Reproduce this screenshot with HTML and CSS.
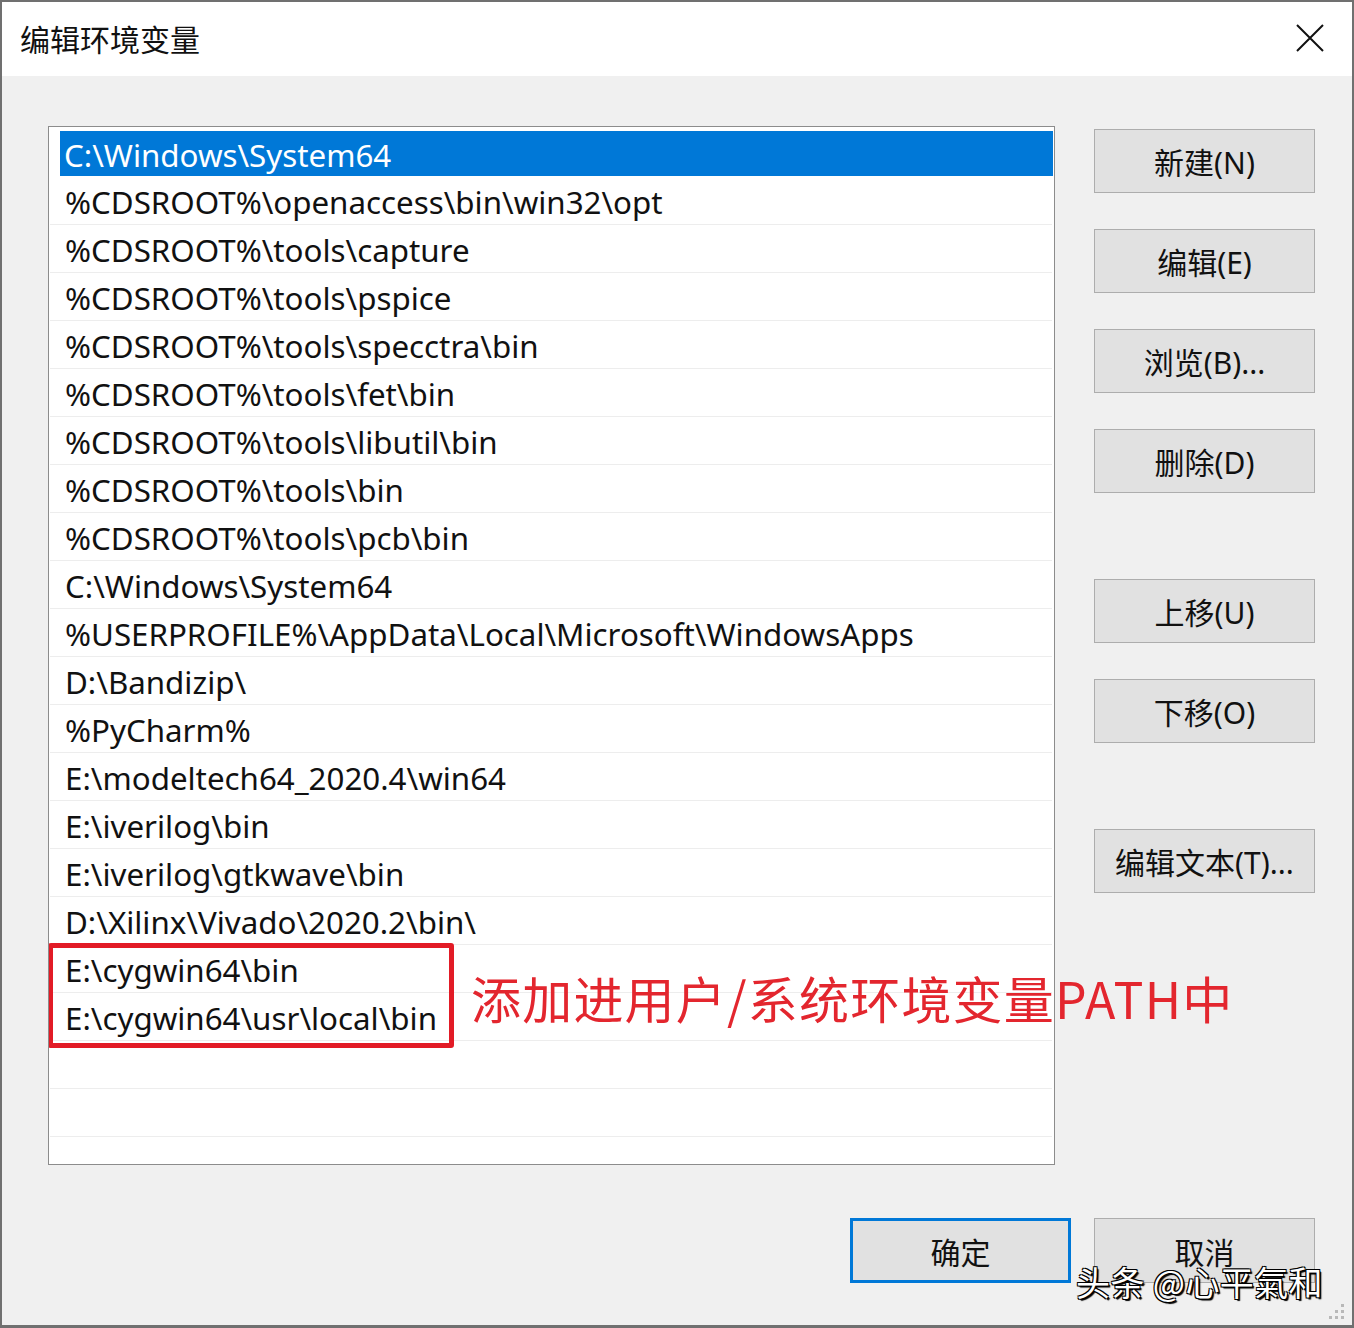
FILE: index.html
```html
<!DOCTYPE html>
<html lang="zh-CN">
<head>
<meta charset="utf-8">
<title>编辑环境变量</title>
<link rel="stylesheet" href="styles.css">
</head>
<body>
<div class="window">
  <div class="titlebar">
    <span class="title">编辑环境变量</span>
    <span class="close">
      <svg width="28" height="28" viewBox="0 0 28 28"><path d="M1 1 L27 27 M27 1 L1 27" stroke="#111" stroke-width="2" fill="none"/></svg>
    </span>
  </div>
  <div class="content">
    <div class="main">
      <div class="listbox">
        <div class="row selected"><span class="sel">C:\Windows\System64</span></div>
        <div class="row">%CDSROOT%\openaccess\bin\win32\opt</div>
        <div class="row">%CDSROOT%\tools\capture</div>
        <div class="row">%CDSROOT%\tools\pspice</div>
        <div class="row">%CDSROOT%\tools\specctra\bin</div>
        <div class="row">%CDSROOT%\tools\fet\bin</div>
        <div class="row">%CDSROOT%\tools\libutil\bin</div>
        <div class="row">%CDSROOT%\tools\bin</div>
        <div class="row">%CDSROOT%\tools\pcb\bin</div>
        <div class="row">C:\Windows\System64</div>
        <div class="row">%USERPROFILE%\AppData\Local\Microsoft\WindowsApps</div>
        <div class="row">D:\Bandizip\</div>
        <div class="row">%PyCharm%</div>
        <div class="row">E:\modeltech64_2020.4\win64</div>
        <div class="row">E:\iverilog\bin</div>
        <div class="row">E:\iverilog\gtkwave\bin</div>
        <div class="row">D:\Xilinx\Vivado\2020.2\bin\</div>
        <div class="row">E:\cygwin64\bin</div>
        <div class="row">E:\cygwin64\usr\local\bin</div>
        <div class="row"></div>
        <div class="row"></div>
        <div class="redbox"></div>
      </div>
      <div class="note">添加进用户/系统环境变量PATH中</div>
      <div class="buttons">
        <div class="btn">新建(N)</div>
        <div class="btn gap-s">编辑(E)</div>
        <div class="btn gap-s">浏览(B)...</div>
        <div class="btn gap-s">删除(D)</div>
        <div class="btn gap-l">上移(U)</div>
        <div class="btn gap-s">下移(O)</div>
        <div class="btn gap-l">编辑文本(T)...</div>
      </div>
    </div>
    <div class="footer">
      <div class="btn default">确定</div>
      <div class="btn">取消</div>
    </div>
    <div class="watermark">头条 @心平氣和</div>
    <div class="grip">
      <svg width="20" height="20" viewBox="0 0 20 20" fill="#b8b8b8">
        <rect x="15" y="3" width="3" height="3"/>
        <rect x="9" y="9" width="3" height="3"/><rect x="15" y="9" width="3" height="3"/>
        <rect x="3" y="15" width="3" height="3"/><rect x="9" y="15" width="3" height="3"/><rect x="15" y="15" width="3" height="3"/>
      </svg>
    </div>
  </div>
</div>
</body>
</html>
```
FILE: styles.css
```css
* { box-sizing: border-box; }
html, body { margin: 0; padding: 0; }
body {
  width: 1354px;
  height: 1328px;
  background: #f0f0f0;
  font-family: "Noto Sans", "Noto Sans CJK SC", sans-serif;
  color: #000;
}
.window {
  width: 1354px;
  height: 1328px;
  border: 2px solid #707070;
  border-bottom-width: 3px;
  background: #f0f0f0;
  display: flex;
  flex-direction: column;
}
.titlebar {
  height: 74px;
  background: #fff;
  display: flex;
  align-items: center;
  justify-content: space-between;
  padding: 0 28px 0 18px;
}
.title {
  font-family: "Noto Sans CJK SC", sans-serif;
  font-size: 30px;
  color: #111;
  margin-top: -3px;
}
.close { display: flex; margin-top: -2px; }
.content {
  position: relative;
  flex: 1;
  padding: 50px 37px 0 46px;
}
.main {
  position: relative;
  display: flex;
  align-items: flex-start;
}
.listbox {
  position: relative;
  width: 1007px;
  height: 1039px;
  background: #fff;
  border: 1px solid #8c8c8c;
  padding: 2px 2px 0 1px;
  overflow: hidden;
}
.row {
  height: 48px;
  border-bottom: 1px solid #ededed;
  font-size: 31.3px;
  line-height: 50px;
  padding-left: 15px;
  white-space: nowrap;
  color: #111;
}
.row.selected { padding-left: 10px; padding-top: 2px; border-bottom-color: #fff; line-height: 45px; }
.sel {
  display: block;
  width: 993px;
  height: 45px;
  line-height: 48px;
  background: #0078d7;
  color: #fff;
  padding-left: 4px;
  overflow: hidden;
}
.redbox {
  position: absolute;
  left: -1px;
  top: 816px;
  width: 406px;
  height: 105px;
  border: 5px solid #e21b26;
  border-radius: 3px;
}
.note {
  position: absolute;
  left: 423px;
  top: 836px;
  font-family: "Noto Sans CJK SC", sans-serif;
  font-size: 50px;
  line-height: 70px;
  letter-spacing: 1.2px;
  color: #e3262e;
  white-space: nowrap;
}
.buttons {
  margin-left: 39px;
  margin-top: 3px;
  display: flex;
  flex-direction: column;
}
.btn {
  width: 221px;
  height: 64px;
  background: #e1e1e1;
  border: 1px solid #adadad;
  display: flex;
  align-items: center;
  justify-content: center;
  font-family: "Noto Sans", "Noto Sans CJK SC", sans-serif;
  font-size: 30px;
  color: #111;
}
.gap-s { margin-top: 36px; }
.gap-l { margin-top: 86px; }
.footer {
  display: flex;
  justify-content: flex-end;
  gap: 23px;
  margin-top: 53px;
}
.footer .btn { height: 65px; }
.btn.default { border: 3px solid #0078d7; }
.watermark {
  position: absolute;
  left: 1074px;
  top: 1181px;
  font-family: "Noto Sans CJK SC", sans-serif;
  font-size: 34px;
  letter-spacing: 0.4px;
  color: #fff;
  white-space: nowrap;
  text-shadow: 1px 1px 0 #000, -1px -1px 0 #000, 1px -1px 0 #000, -1px 1px 0 #000, 2px 2px 1px #000;
}
.grip {
  position: absolute;
  right: 6px;
  bottom: 4px;
  display: flex;
}
```
